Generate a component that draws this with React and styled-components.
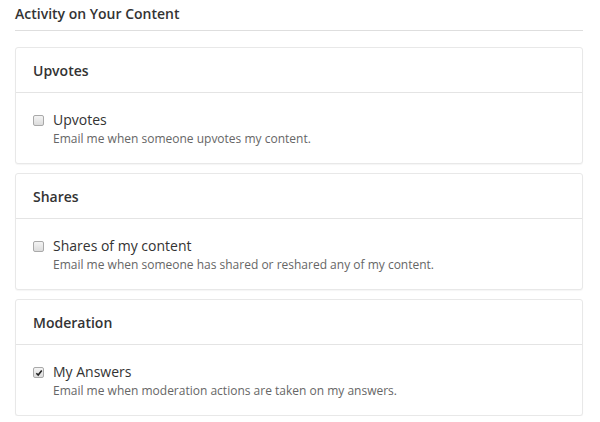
import React, { useState } from "react";
import styled, { createGlobalStyle } from "styled-components";

const GlobalStyle = createGlobalStyle`
  body {
    margin: 0;
    background: #fff;
    font-family: "Open Sans", "Noto Sans", sans-serif;
    color: #333;
  }
`;

const Page = styled.div`
  padding: 4px 17px 0 15px;
`;

const Title = styled.h2`
  margin: 0;
  padding-bottom: 7px;
  font-size: 14px;
  font-weight: 600;
  line-height: 19px;
  color: #333;
  border-bottom: 1px solid #dedede;
`;

const CardList = styled.div`
  display: flex;
  flex-direction: column;
  gap: 9px;
  margin-top: 16px;
`;

const Card = styled.section`
  border: 1px solid #e8e8e8;
  border-radius: 3px;
  box-shadow: 0 1px 1px rgba(0, 0, 0, 0.04);
  background: #fff;
`;

const CardHeader = styled.div`
  height: 44px;
  display: flex;
  align-items: center;
  padding: 0 17px;
  font-size: 14px;
  font-weight: 600;
  color: #333;
  border-bottom: 1px solid #e4e4e4;
`;

const CardBody = styled.label`
  display: flex;
  align-items: flex-start;
  gap: 9px;
  padding: 17px 17px 15px;
  cursor: pointer;
`;

const Box = styled.span`
  flex: none;
  width: 9px;
  height: 9px;
  margin-top: 5px;
  border: 1px solid #a9a9a9;
  border-radius: 2px;
  background: linear-gradient(#f4f4f4, #dcdcdc);
  display: flex;
  align-items: center;
  justify-content: center;
`;

const Text = styled.div`
  display: flex;
  flex-direction: column;
`;

const Label = styled.span`
  font-size: 14px;
  line-height: 20px;
  color: #333;
`;

const Hint = styled.span`
  font-size: 12px;
  line-height: 18px;
  color: #666;
`;

const Check = () => (
  <svg width="8" height="8" viewBox="0 0 9 9">
    <path d="M1.5 4.8 L3.6 6.8 L7.6 1.8" fill="none" stroke="#222" strokeWidth="1.8" />
  </svg>
);

const sections = [
  { title: "Upvotes", label: "Upvotes", hint: "Email me when someone upvotes my content.", on: false },
  { title: "Shares", label: "Shares of my content", hint: "Email me when someone has shared or reshared any of my content.", on: false },
  { title: "Moderation", label: "My Answers", hint: "Email me when moderation actions are taken on my answers.", on: true },
];

const App = () => {
  const [checked, setChecked] = useState(sections.map((s) => s.on));

  const toggle = (index) => {
    setChecked(checked.map((c, i) => (i === index ? !c : c)));
  };

  return (
    <Page>
      <GlobalStyle />
      <Title>Activity on Your Content</Title>
      <CardList>
        {sections.map((s, index) => (
          <Card key={s.title}>
            <CardHeader>{s.title}</CardHeader>
            <CardBody onClick={() => toggle(index)}>
              <Box>{checked[index] && <Check />}</Box>
              <Text>
                <Label>{s.label}</Label>
                <Hint>{s.hint}</Hint>
              </Text>
            </CardBody>
          </Card>
        ))}
      </CardList>
    </Page>
  );
};

export default App;
